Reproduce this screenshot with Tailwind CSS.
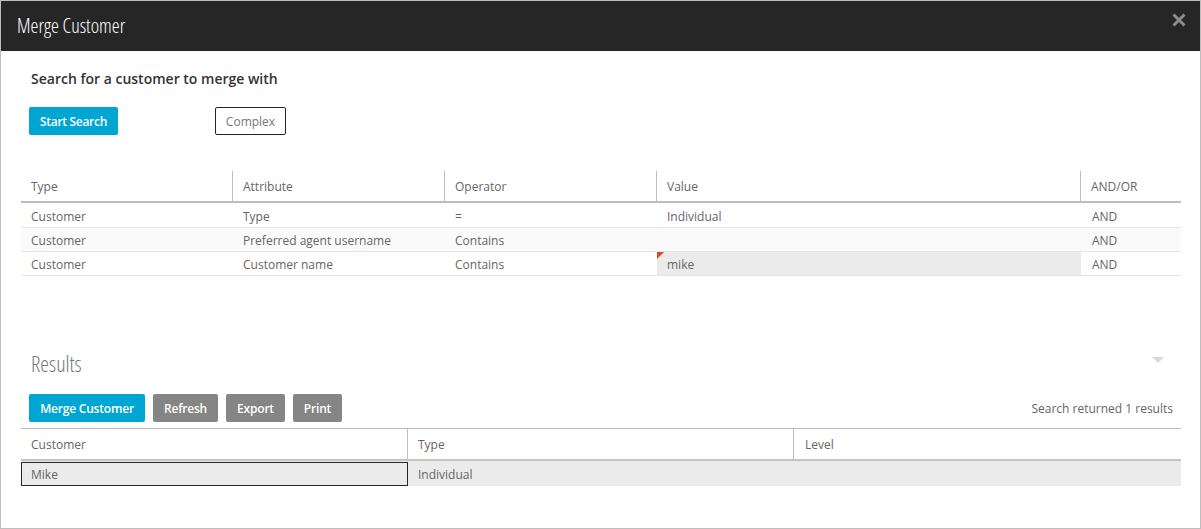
<!DOCTYPE html>
<html><head><meta charset="utf-8"><script src="https://cdn.jsdelivr.net/npm/@tailwindcss/browser@4"></script></head>
<body class="bg-white">
<div class="w-[1201px] h-[529px] border border-[#bdbdbd] bg-white flex flex-col overflow-hidden font-['Open_Sans',sans-serif] text-[12px] text-[#666]">
  <div class="h-[50px] bg-[#262626] flex items-center justify-between pl-4 pr-[14px] shrink-0">
    <span class="text-white text-[20px] font-stretch-condensed font-light">Merge Customer</span>
    <svg width="14" height="14" viewBox="0 0 14 14" class="mb-[12px]"><path d="M1.5 1.5L12.5 12.5M12.5 1.5L1.5 12.5" stroke="#8c8c8c" stroke-width="3"/></svg>
  </div>
  <div class="pl-[30px] pt-[18px] h-[20px] box-content text-[14px] leading-[20px] font-semibold text-[#333]">Search for a customer to merge with</div>
  <div class="flex pl-[28px] mt-[18px] gap-[97px]">
    <div class="w-[89px] h-[28px] pt-px rounded-[2px] bg-[#00a6d3] text-white font-semibold tracking-[-0.3px] flex items-center justify-center">Start Search</div>
    <div class="w-[71px] h-[28px] pt-px rounded-[2px] border border-[#262626] text-[#777] flex items-center justify-center">Complex</div>
  </div>
  <div class="mx-[20px] mt-[36px] w-[1160px]">
    <div class="grid grid-cols-[212px_212px_212px_424px_100px] h-[32px] border-b-2 border-[#bdbdbd]">
      <div class="pl-[10px] pt-[2px] flex items-center border-r border-[#bdbdbd]">Type</div>
      <div class="pl-[10px] pt-[2px] flex items-center border-r border-[#bdbdbd]">Attribute</div>
      <div class="pl-[10px] pt-[2px] flex items-center border-r border-[#bdbdbd]">Operator</div>
      <div class="pl-[10px] pt-[2px] flex items-center border-r border-[#bdbdbd]">Value</div>
      <div class="pl-[10px] pt-[2px] flex items-center">AND/OR</div>
    </div>
    <div class="grid grid-cols-[212px_212px_212px_424px_100px] h-[25px] pt-[3px] border-b border-[#e6e6e6] items-center">
      <div class="pl-[10px]">Customer</div><div class="pl-[10px]">Type</div><div class="pl-[10px]">=</div><div class="pl-[10px]">Individual</div><div class="pl-[11px]">AND</div>
    </div>
    <div class="grid grid-cols-[212px_212px_212px_424px_100px] h-[24px] pt-[2px] border-b border-[#e6e6e6] bg-[#fafafa] items-center">
      <div class="pl-[10px]">Customer</div><div class="pl-[10px]">Preferred agent username</div><div class="pl-[10px]">Contains</div><div></div><div class="pl-[11px]">AND</div>
    </div>
    <div class="grid grid-cols-[212px_212px_212px_424px_100px] h-[24px] border-b border-[#e6e6e6] items-center">
      <div class="pl-[10px] pt-[2px]">Customer</div><div class="pl-[10px] pt-[2px]">Customer name</div><div class="pl-[10px] pt-[2px]">Contains</div>
      <div class="relative pl-[10px] pt-[2px] h-full flex items-center bg-[#ebebeb]">mike<span class="absolute left-0 top-0 w-0 h-0 border-t-[7px] border-r-[7px] border-t-[#d9482b] border-r-transparent"></span></div>
      <div class="pl-[11px] pt-[2px]">AND</div>
    </div>
  </div>
  <div class="flex items-center justify-between pl-[30px] pr-[36px] mt-[70px] h-[34px]">
    <span class="text-[22px] font-light text-[#777] font-stretch-condensed">Results</span>
    <span class="w-0 h-0 border-x-[6px] border-x-transparent border-t-[6px] border-t-[#d9d9d9] mb-[6px]"></span>
  </div>
  <div class="flex items-center pl-[28px] pr-[27px] mt-[14px] gap-[8px]">
    <div class="w-[116px] h-[28px] pt-px rounded-[2px] bg-[#00a6d3] text-white font-semibold tracking-[-0.2px] flex items-center justify-center">Merge Customer</div>
    <div class="w-[65px] h-[28px] pt-px rounded-[2px] bg-[#858585] text-white font-semibold tracking-[-0.2px] flex items-center justify-center">Refresh</div>
    <div class="w-[59px] h-[28px] pt-px rounded-[2px] bg-[#858585] text-white font-semibold tracking-[-0.2px] flex items-center justify-center">Export</div>
    <div class="w-[49px] h-[28px] pt-px rounded-[2px] bg-[#858585] text-white font-semibold tracking-[-0.2px] flex items-center justify-center">Print</div>
    <span class="ml-auto pt-px">Search returned 1 results</span>
  </div>
  <div class="mx-[20px] mt-[6px] w-[1160px] border-t border-[#bdbdbd]">
    <div class="grid grid-cols-[387px_386px_387px] h-[32px] border-b-2 border-[#c4c4c4]">
      <div class="pl-[10px] pt-[2px] flex items-center border-r border-[#bdbdbd]">Customer</div>
      <div class="pl-[10px] pt-[2px] flex items-center border-r border-[#bdbdbd]">Type</div>
      <div class="pl-[11px] pt-[2px] flex items-center">Level</div>
    </div>
    <div class="grid grid-cols-[387px_386px_387px] h-[25px] bg-[#ebebeb] items-center">
      <div class="pl-[9px] pt-[2px] h-[24px] flex items-center border border-[#262626]">Mike</div>
      <div class="pl-[10px] pt-[2px]">Individual</div><div></div>
    </div>
  </div>
</div>
</body></html>
